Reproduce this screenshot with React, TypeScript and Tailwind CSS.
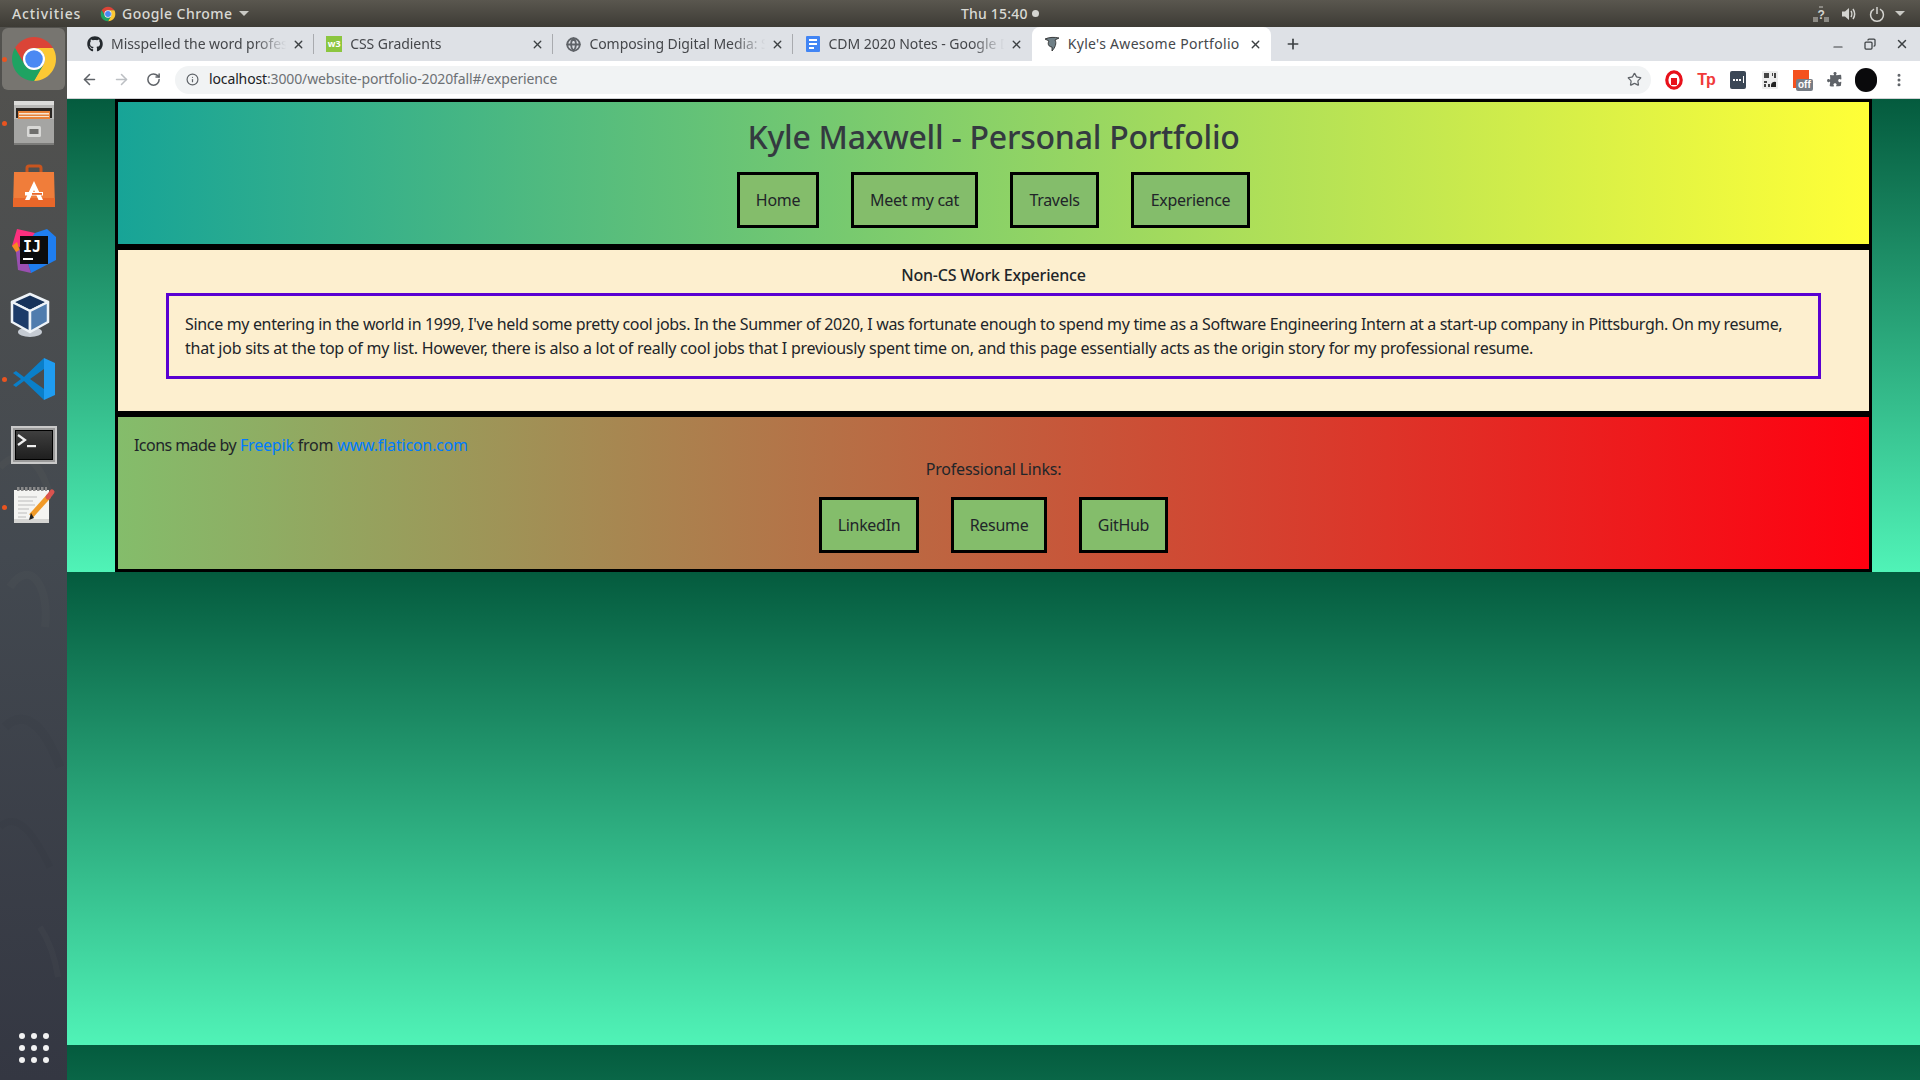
import { FaGithub } from 'react-icons/fa';
import { FiGlobe } from 'react-icons/fi';
import { HiPuzzlePiece } from 'react-icons/hi2';
import { ArrowLeft, ArrowRight, Info, Minus, Plus, RotateCw, Star, X, Copy, EllipsisVertical } from 'lucide-react';
import type { ReactNode } from 'react';

function ChromeLogo({ size }: { size: number }) {
    return (
        <svg width={size} height={size} viewBox="0 0 48 48">
            <path d="M43.05 13A22 22 0 0 0 5 13L14.5 29.5A11 11 0 0 1 24 13Z" fill="#db4437" />
            <path d="M43.05 13H24A11 11 0 0 1 33.5 29.5L24 46A22 22 0 0 0 43.05 13Z" fill="#fcc934" />
            <path d="M5 13L14.5 29.5A11 11 0 0 0 33.5 29.5L24 46A22 22 0 0 1 5 13Z" fill="#1ea362" />
            <circle cx="24" cy="24" r="11" fill="#fff" />
            <circle cx="24" cy="24" r="8.8" fill="#4a89f3" />
        </svg>
    );
}

function FilesIcon() {
    return (
        <svg width="44" height="46" viewBox="0 0 44 46">
            <rect x="2" y="1" width="40" height="44" rx="2" fill="#b9b9b7" />
            <rect x="2" y="1" width="40" height="4" fill="#dcdcda" />
            <rect x="4" y="8" width="36" height="10" fill="#2a2623" />
            <rect x="6" y="11" width="32" height="8" fill="#e8833a" />
            <rect x="7" y="13" width="30" height="1.5" fill="#f7e6d4" />
            <rect x="7" y="16" width="30" height="1" fill="#f7e6d4" />
            <rect x="2" y="19" width="40" height="26" fill="#a5a5a3" />
            <rect x="15" y="26" width="14" height="11" rx="1.5" fill="#d8d8d6" />
            <rect x="17.5" y="29" width="9" height="5" fill="#6f6f6d" />
            <rect x="2" y="43" width="40" height="2" fill="#7b7b79" />
        </svg>
    );
}

function StoreIcon() {
    return (
        <svg width="44" height="44" viewBox="0 0 44 44" className="-translate-y-px">
            <path d="M15 10V4a2 2 0 0 1 2-2h10a2 2 0 0 1 2 2v6" fill="none" stroke="#c8551f" strokeWidth="3" />
            <path d="M2 8H42L43 43H1Z" fill="#f07d3a" />
            <rect x="1" y="34" width="42" height="9" fill="#e9672a" />
            <path d="M22 17L13 36H17.5L22 26L26.5 36H31Z" fill="#fff" />
            <rect x="13" y="28" width="18" height="3.5" fill="#fff" />
            <rect x="20" y="29" width="10" height="1.8" fill="#e9672a" />
        </svg>
    );
}

function IntellijIcon() {
    return (
        <svg width="46" height="46" viewBox="0 0 46 46">
            <path d="M6 1L24 5L20 20L1 18Z" fill="#fc2f7e" />
            <path d="M24 5L36 1L45 9V32L20 45L12 20Z" fill="#1f7ef0" />
            <path d="M1 18L6 14L10 26L5 24Z" fill="#f58a1f" />
            <path d="M5 24L12 20L20 45L7 42Z" fill="#9a4fb0" />
            <rect x="9" y="8" width="28" height="28" fill="#0c0c0c" />
            <text x="12" y="24" fontFamily="'DejaVu Sans Mono', monospace" fontWeight="700" fontSize="15" fill="#fff">IJ</text>
            <rect x="12" y="30" width="10" height="2" fill="#fff" />
        </svg>
    );
}

function VirtualBoxIcon() {
    return (
        <svg width="40" height="46" viewBox="0 0 40 46" className="-translate-x-[4px]">
            <ellipse cx="20" cy="40" rx="12" ry="5" fill="#c5cbd3" />
            <path d="M20 2L38 10V30L20 40L2 30V10Z" fill="#1d3f6e" />
            <path d="M20 2L38 10L20 19L2 10Z" fill="#16325a" stroke="#eef3f8" strokeWidth="2.5" strokeLinejoin="round" />
            <path d="M2 10V30L20 40V19Z" fill="#1c3b69" stroke="#eef3f8" strokeWidth="2.5" strokeLinejoin="round" />
            <path d="M38 10V30L20 40V19Z" fill="#4f7cae" stroke="#eef3f8" strokeWidth="2.5" strokeLinejoin="round" />
        </svg>
    );
}

function VscodeIcon() {
    return (
        <svg width="44" height="44" viewBox="0 0 44 44">
            <path d="M32 1L43 6V38L32 43Z" fill="#1f9cf0" />
            <path d="M32 1L12 20L4 14L1 16L9 22L1 28L4 30L12 24L32 43V32L18 22L32 12Z" fill="#0a7fc9" />
        </svg>
    );
}

function TerminalIcon() {
    return (
        <div className="flex h-[38px] w-[46px] translate-y-[2px] border-2 border-[#c9c9c9] bg-[#9a9a9a] p-[2px]">
            <div className="flex h-full w-full items-start border border-black bg-linear-to-b from-[#3f3f3f] to-[#1f1f1f]">
                <svg width="30" height="28" viewBox="0 0 30 28">
                    <path d="M2 4L9 9L2 14" fill="none" stroke="#eee" strokeWidth="2.2" />
                    <rect x="11" y="14" width="9" height="2.2" fill="#eee" />
                </svg>
            </div>
        </div>
    );
}

function NotepadIcon() {
    return (
        <svg width="46" height="40" viewBox="0 0 46 40" className="-translate-y-[2px]">
            <rect x="3" y="5" width="35" height="33" fill="#f4f4f2" />
            <rect x="3" y="34" width="35" height="4" fill="#d5d5d3" />
            <path d="M6 4H36" stroke="#8a8a8a" strokeWidth="4" strokeDasharray="2.5 1.5" />
            <path d="M7 12H26M7 16H22M7 20H24M7 24H18M7 28H16M7 32H15" stroke="#bcbcbc" strokeWidth="1" />
            <path d="M20 31L38 11" stroke="#f09a28" strokeWidth="5" />
            <path d="M37 12L41 7" stroke="#d9534f" strokeWidth="5" strokeLinecap="round" />
            <path d="M20 28L23 33L18 35Z" fill="#222" />
        </svg>
    );
}

function DockItem({ children, running, active }: { children: ReactNode; running?: boolean; active?: boolean }) {
    return (
        <div className="relative flex h-16 w-full items-center justify-center">
            {active && <div className="absolute inset-x-[2px] inset-y-px rounded-md bg-[#777570]" />}
            {running && <div className="absolute left-[2px] top-[29.5px] h-[5px] w-[5px] rounded-full bg-[#e95420]" />}
            <div className="relative flex">{children}</div>
        </div>
    );
}

function Dock() {
    return (
        <aside className="relative flex w-[67px] shrink-0 flex-col overflow-hidden bg-linear-to-b from-[#53524e] via-[#434950] to-[#343742]">
            <svg className="absolute inset-0 opacity-[0.06]" width="67" height="1053" viewBox="0 0 67 1053">
                <path d="M0 440C20 420 40 430 50 470" fill="none" stroke="#8b8a7c" strokeWidth="7" />
                <path d="M10 560C30 530 50 560 45 600" fill="none" stroke="#7b7a70" strokeWidth="8" />
                <path d="M5 700C25 680 45 700 60 740" fill="none" stroke="#1f262c" strokeWidth="9" />
                <path d="M0 800C20 780 40 820 50 840" fill="none" stroke="#20262b" strokeWidth="7" />
                <path d="M40 900C50 915 55 930 58 950" fill="none" stroke="#7a7f80" strokeWidth="6" />
            </svg>
            <DockItem active running><ChromeLogo size={48} /></DockItem>
            <DockItem running><FilesIcon /></DockItem>
            <DockItem><StoreIcon /></DockItem>
            <DockItem><IntellijIcon /></DockItem>
            <DockItem><VirtualBoxIcon /></DockItem>
            <DockItem running><VscodeIcon /></DockItem>
            <DockItem><TerminalIcon /></DockItem>
            <DockItem running><NotepadIcon /></DockItem>
            <div className="relative mt-auto mb-[17px] grid grid-cols-3 gap-x-[6px] gap-y-[6px] self-center">
                {Array.from({ length: 9 }).map((_, i) => (
                    <div key={i} className="h-[6px] w-[6px] rounded-full bg-[#f2f2f2]" />
                ))}
            </div>
        </aside>
    );
}

function TopBar() {
    return (
        <header className="relative flex h-[27px] shrink-0 items-center bg-[linear-gradient(to_bottom,#5a574f,#3d3b35)] text-[14px] font-medium tracking-[0.2px] text-[#d9d9d4]">
            <div className="flex w-[961px] items-center">
                <span className="ml-3 w-[88px] tracking-[0.9px]">Activities</span>
                <ChromeLogo size={16} />
                <span className="ml-[6px] tracking-[0.45px]">Google Chrome</span>
                <span className="ml-[7px] h-0 w-0 border-x-[5px] border-t-[5px] border-x-transparent border-t-[#c9c9c4]" />
            </div>
            <span>Thu 15:40</span>
            <span className="ml-[4px] h-[7px] w-[7px] rounded-full bg-[#d4d4d0]" />
            <div className="flex-1" />
            <div className="mr-[15px] flex items-center text-[#d4d4d0]">
                <svg width="16" height="16" viewBox="0 0 16 16">
                    <rect x="0" y="11" width="5" height="5" fill="#8c8a84" />
                    <rect x="11" y="11" width="5" height="5" fill="#8c8a84" />
                    <rect x="6" y="0" width="4" height="2" fill="#8c8a84" />
                    <text x="4.5" y="13" fontFamily="'Liberation Sans', sans-serif" fontWeight="700" fontSize="12" fill="#d4d4d0">?</text>
                </svg>
                <svg width="16" height="16" viewBox="0 0 16 16" fill="none" className="ml-[12px]">
                    <path d="M1 5.5H4L8 2V14L4 10.5H1Z" fill="#d4d4d0" />
                    <path d="M10 5C11 6.5 11 9.5 10 11M12 3C14 6 14 10 12 13" stroke="#d4d4d0" strokeWidth="1.5" />
                </svg>
                <svg width="16" height="16" viewBox="0 0 16 16" fill="none" className="ml-[12px]">
                    <path d="M5 3.2A6.4 6.4 0 1 0 11 3.2M8 1V8" stroke="#d4d4d0" strokeWidth="1.5" />
                </svg>
                <span className="ml-[10px] h-0 w-0 border-x-[5px] border-t-[5px] border-x-transparent border-t-[#c9c9c4]" />
            </div>
        </header>
    );
}

interface BrowserTabProps {
    icon: ReactNode;
    title: string;
    active?: boolean;
    separator?: boolean;
}

function BrowserTab({ icon, title, active, separator }: BrowserTabProps) {
    return (
        <div
            className={
                active
                    ? 'relative flex h-full w-[239.2px] shrink-0 items-center rounded-t-lg bg-white pl-[12px] pr-[7px]'
                    : 'relative flex h-full w-[239.2px] shrink-0 items-center pl-[12px] pr-[7px]'
            }
        >
            <span className="flex w-4 shrink-0 justify-center">{icon}</span>
            <span
                className={
                    active
                        ? 'ml-2 flex-1 -translate-y-px overflow-hidden whitespace-nowrap text-[14px] tracking-[0.3px] text-[#45474b]'
                        : 'ml-2 flex-1 -translate-y-px overflow-hidden whitespace-nowrap text-[14px] tracking-[-0.05px] text-[#45474b] [mask-image:linear-gradient(to_right,#000_80%,transparent_98%)]'
                }
            >
                {title}
            </span>
            <X size={13} strokeWidth={2.5} className="mx-[2px] shrink-0 text-[#3c4043]" />
            {separator && <div className="absolute right-0 top-[7px] h-[20px] w-px bg-[#a9abaf]" />}
        </div>
    );
}

function TabStrip() {
    return (
        <div className="flex h-[34px] shrink-0 items-center bg-[#dee1e6] pl-2">
            <BrowserTab separator title="Misspelled the word professional" icon={<FaGithub size={16} className="text-[#24292e]" />} />
            <BrowserTab
                separator
                title="CSS Gradients"
                icon={
                    <span className="flex h-4 w-4 items-center justify-center bg-[#8cc63f] text-[9px] font-bold text-white">w3</span>
                }
            />
            <BrowserTab separator title="Composing Digital Media: Spring" icon={<FiGlobe size={15} strokeWidth={3} className="text-[#5f6368]" />} />
            <BrowserTab
                title="CDM 2020 Notes - Google Docs"
                icon={
                    <span className="flex h-4 w-[14px] flex-col justify-center gap-[2px] rounded-[1px] bg-[#4285f4] pl-[3px]">
                        <span className="h-[2px] w-[8px] bg-white" />
                        <span className="h-[2px] w-[8px] bg-white" />
                        <span className="h-[2px] w-[5px] bg-white" />
                    </span>
                }
            />
            <BrowserTab
                active
                title="Kyle's Awesome Portfolio"
                icon={
                    <svg width="16" height="16" viewBox="0 0 16 16" fill="none">
                        <path d="M1 3C5 1 11 1 15 2L11 4C13 7 11 12 8 15L8 11C5 11 3 8 5 5Z" fill="#6f7f86" stroke="#222" strokeWidth="0.8" />
                    </svg>
                }
            />
            <div className="flex w-[44px] justify-center">
                <Plus size={16} strokeWidth={2.5} className="text-[#3c4043]" />
            </div>
            <div className="ml-auto mr-[11px] flex items-center gap-[19px] text-[#3c4043]">
                <Minus size={14} strokeWidth={2} className="translate-y-[3px]" />
                <Copy size={12} strokeWidth={2.5} className="-scale-x-100" />
                <X size={14} strokeWidth={2.5} />
            </div>
        </div>
    );
}

function ExtensionIcons() {
    return (
        <div className="ml-[7px] flex shrink-0 items-center">
            <span className="flex w-[32px] justify-center">
                <svg width="18" height="20" viewBox="0 0 18 20">
                    <ellipse cx="9" cy="10" rx="7.2" ry="8.2" fill="#fff" stroke="#e8111b" strokeWidth="3.2" />
                    <path d="M6 15V8H12V15Z" fill="#e8111b" />
                </svg>
            </span>
            <span className="flex w-[32px] justify-center font-['Liberation_Sans',sans-serif] text-[16px] font-bold tracking-[-1px] text-[#f03a3a]">Tp</span>
            <span className="flex w-[32px] justify-center">
                <span className="flex h-[18px] w-[16px] items-center justify-center gap-[1px] rounded-[2px] bg-[#3b4756]">
                    <span className="h-[2px] w-[2px] bg-white" />
                    <span className="h-[2px] w-[2px] bg-white" />
                    <span className="h-[2px] w-[2px] bg-white" />
                    <span className="ml-px h-[7px] w-px bg-white" />
                </span>
            </span>
            <span className="flex w-[32px] justify-center">
                <svg width="16" height="18" viewBox="0 0 16 18">
                    <rect width="16" height="18" rx="1" fill="#ececec" />
                    <path d="M2 2H7V7H2ZM10 2H11V5H10ZM12 2H14V7H12ZM2 10H5V12H2ZM6 13H8V16H6ZM2 13H4V16H2Z" fill="#444" />
                    <path d="M9 14A3.5 3.5 0 0 1 14 11V16H9Z" fill="#222" />
                </svg>
            </span>
            <span className="relative flex w-[32px] justify-center">
                <span className="h-[18px] w-[16px] translate-x-[-1px] -translate-y-px bg-[#f4511e]" />
                <span className="absolute left-[10px] top-[8px] rounded-[2px] bg-[#777d85] px-[2px] font-['Liberation_Sans',sans-serif] text-[10px] font-bold leading-[12px] text-white">off</span>
            </span>
            <span className="flex w-[32px] justify-center">
                <HiPuzzlePiece size={17} className="text-[#5f6368]" />
            </span>
            <span className="flex w-[32px] justify-center">
                <span className="h-[24px] w-[22px] rounded-full bg-[#0a0a0c]" />
            </span>
            <span className="flex w-[33px] justify-center">
                <EllipsisVertical size={16} strokeWidth={2.5} className="text-[#5f6368]" />
            </span>
        </div>
    );
}

function Toolbar() {
    return (
        <div className="flex h-[38px] shrink-0 items-center border-b border-[#d0d2d5] bg-white pl-[14px]">
            <ArrowLeft size={17} strokeWidth={2.2} className="shrink-0 text-[#5f6368]" />
            <ArrowRight size={17} strokeWidth={2.2} className="ml-[15px] shrink-0 text-[#bcbfc3]" />
            <RotateCw size={15} strokeWidth={2.4} className="ml-[16px] shrink-0 text-[#5f6368]" />
            <div className="ml-[14px] flex h-[28px] w-[1476px] shrink-0 items-center rounded-full bg-[#f1f3f4] pl-[11px] pr-[9px]">
                <Info size={13} strokeWidth={2.2} className="text-[#5f6368]" />
                <span className="ml-[10px] flex-1 -translate-y-px text-[14px] tracking-[-0.13px] text-[#6d7175]">
                    <span className="text-[#202124]">localhost</span>:3000/website-portfolio-2020fall#/experience
                </span>
                <Star size={15} strokeWidth={2} className="text-[#5f6368]" />
            </div>
            <ExtensionIcons />
        </div>
    );
}

function LinkButton({ label, widthClass }: { label: string; widthClass: string }) {
    return (
        <button className={`flex h-[56px] items-center justify-center border-[3px] border-black bg-[#84bd6b] text-[16px] tracking-[-0.3px] text-[#212529] ${widthClass}`}>
            {label}
        </button>
    );
}

function Portfolio() {
    return (
        <div className="flex flex-col border-x-[3px] border-t-[3px] border-black">
            <section className="flex h-[142px] flex-col items-center bg-[linear-gradient(to_right,#17a497,#ffff37)] pt-[11px]">
                <h1 className="text-[32px] font-medium leading-[48px] tracking-[-0.25px] text-[#343a40]">Kyle Maxwell - Personal Portfolio</h1>
                <nav className="mt-[11px] flex gap-8">
                    <LinkButton label="Home" widthClass="w-[82px]" />
                    <LinkButton label="Meet my cat" widthClass="w-[127px]" />
                    <LinkButton label="Travels" widthClass="w-[89px]" />
                    <LinkButton label="Experience" widthClass="w-[119px]" />
                </nav>
            </section>
            <div className="h-[6px] bg-black" />
            <section className="flex h-[161px] flex-col items-center bg-[#fdefcf] px-12 pt-[13px]">
                <h5 className="text-[16px] font-medium leading-6 tracking-[-0.2px] text-[#212529]">Non-CS Work Experience</h5>
                <p className="mt-[6px] w-full border-[3px] border-[#5a00d2] p-4 text-[16px] leading-6 text-[#212529]">
                    <span className="whitespace-nowrap tracking-[-0.337px]">
                        Since my entering in the world in 1999, I've held some pretty cool jobs. In the Summer of 2020, I was fortunate enough to spend my time as a Software Engineering Intern at a start-up company in Pittsburgh. On my resume,
                    </span>
                    <br />
                    <span className="whitespace-nowrap tracking-[-0.245px]">
                        that job sits at the top of my list. However, there is also a lot of really cool jobs that I previously spent time on, and this page essentially acts as the origin story for my professional resume.
                    </span>
                </p>
            </section>
            <div className="h-[6px] bg-black" />
            <section className="flex h-[152px] flex-col bg-[linear-gradient(to_right,#84bd6b,#ff0010)] p-4 text-[16px] leading-6 tracking-[-0.2px] text-[#212529]">
                <p>
                    <span className="tracking-[-0.55px]">Icons made by</span> <a className="text-[#007bff]">Freepik</a> from <a className="text-[#007bff]">www.flaticon.com</a>
                </p>
                <p className="text-center">Professional Links:</p>
                <nav className="mt-4 flex justify-center gap-8">
                    <LinkButton label="LinkedIn" widthClass="w-[100px]" />
                    <LinkButton label="Resume" widthClass="w-[96px]" />
                    <LinkButton label="GitHub" widthClass="w-[89px]" />
                </nav>
            </section>
            <div className="h-[3px] bg-black" />
        </div>
    );
}

export default function App() {
    return (
        <div className="flex h-screen w-screen flex-col overflow-hidden font-['Noto_Sans',sans-serif]">
            <TopBar />
            <div className="flex min-h-0 flex-1">
                <Dock />
                <div className="flex min-w-0 flex-1 flex-col">
                    <TabStrip />
                    <Toolbar />
                    <main className="flex-1 bg-[linear-gradient(to_bottom,#045b3e,#50f3b7)] bg-[length:100%_473px] px-12">
                        <Portfolio />
                    </main>
                </div>
            </div>
        </div>
    );
}
